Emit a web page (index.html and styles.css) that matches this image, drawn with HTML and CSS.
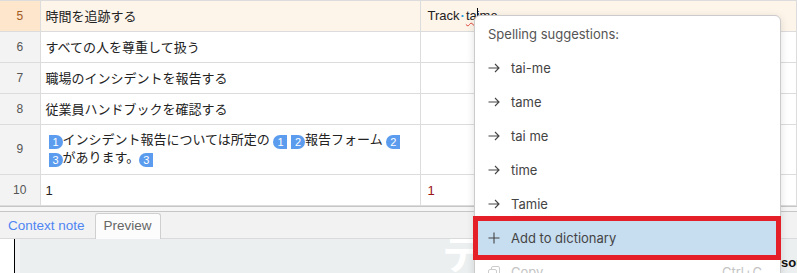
FILE: index.html
```html
<!DOCTYPE html>
<html lang="ja">
  <head>
    <meta charset="UTF-8">
    <meta name="viewport" content="width=device-width, initial-scale=1.0">
    <title>Segment editor</title>
    <link rel="stylesheet" href="styles.css">
  </head>
  <body>
    <div class="editor">
      <table class="segments">
        <colgroup>
          <col class="numcol">
          <col class="srccol">
          <col class="tgtcol">
        </colgroup>
        <tr class="active">
          <td class="num">5</td>
          <td class="src">時間を追跡する</td>
          <td class="tgt">Track<span class="spacedot">·</span><span class="misspelt">ta<span class="caret"></span>ime</span></td>
        </tr>
        <tr>
          <td class="num">6</td>
          <td class="src">すべての人を尊重して扱う</td>
          <td class="tgt"></td>
        </tr>
        <tr>
          <td class="num">7</td>
          <td class="src">職場のインシデントを報告する</td>
          <td class="tgt"></td>
        </tr>
        <tr>
          <td class="num">8</td>
          <td class="src">従業員ハンドブックを確認する</td>
          <td class="tgt"></td>
        </tr>
        <tr class="tall">
          <td class="num">9</td>
          <td class="src tagged">
            <span class="tag open">1</span>インシデント報告については所定の <span class="tag close">1</span> <span class="tag open">2</span>報告フォーム <span class="tag close">2</span><br>
            <span class="tag open">3</span>があります。<span class="tag close">3</span>
          </td>
          <td class="tgt"></td>
        </tr>
        <tr>
          <td class="num">10</td>
          <td class="src">1</td>
          <td class="tgt"><span class="num-red">1</span></td>
        </tr>
      </table>

      <div class="splitter"></div>

      <div class="tabs">
        <div class="tab link">Context note</div>
        <div class="tab current">Preview</div>
      </div>

      <div class="preview">
        <div class="gutter"></div>
        <div class="pv-body">
          <div class="pv-title">テ</div>
          <div class="pv-source">source</div>
        </div>
      </div>
    </div>

    <div class="menu">
      <div class="menu-head">Spelling suggestions:</div>
      <div class="menu-item">
        <svg class="ico" viewBox="0 0 12 10"><path d="M0.5 5H11M7 1l4 4-4 4" fill="none" stroke="#444" stroke-width="1.1"/></svg>
        <span>tai-me</span>
      </div>
      <div class="menu-item">
        <svg class="ico" viewBox="0 0 12 10"><path d="M0.5 5H11M7 1l4 4-4 4" fill="none" stroke="#444" stroke-width="1.1"/></svg>
        <span>tame</span>
      </div>
      <div class="menu-item">
        <svg class="ico" viewBox="0 0 12 10"><path d="M0.5 5H11M7 1l4 4-4 4" fill="none" stroke="#444" stroke-width="1.1"/></svg>
        <span>tai me</span>
      </div>
      <div class="menu-item">
        <svg class="ico" viewBox="0 0 12 10"><path d="M0.5 5H11M7 1l4 4-4 4" fill="none" stroke="#444" stroke-width="1.1"/></svg>
        <span>time</span>
      </div>
      <div class="menu-item">
        <svg class="ico" viewBox="0 0 12 10"><path d="M0.5 5H11M7 1l4 4-4 4" fill="none" stroke="#444" stroke-width="1.1"/></svg>
        <span>Tamie</span>
      </div>
      <div class="menu-item hover">
        <svg class="ico" viewBox="0 0 12 12"><path d="M6 0.5v11M0.5 6h11" fill="none" stroke="#444" stroke-width="1.1"/></svg>
        <span>Add to dictionary</span>
      </div>
      <div class="menu-item disabled">
        <svg class="ico" viewBox="0 0 12 12"><rect x="3.5" y="0.5" width="8" height="8" rx="1.5" fill="none" stroke="#ccc"/><rect x="0.5" y="3.5" width="8" height="8" rx="1.5" fill="#fff" stroke="#ccc"/></svg>
        <span>Copy</span>
        <span class="shortcut">Ctrl+C</span>
      </div>
    </div>
  </body>
</html>
```

FILE: styles.css
```css
body {
  margin: 0;
  background-color: white;
  font-family: "Liberation Sans", "Noto Sans CJK JP", sans-serif;
  overflow: hidden;
}
.editor {
  display: flex;
  flex-direction: column;
  width: 797px;
  height: 273px;
  overflow: hidden;
}
.segments {
  flex-shrink: 0;
  width: 100%;
  height: 206px;
  table-layout: fixed;
  border-collapse: collapse;
  border-top: 1px solid #e2e2e2;
  font-size: 13px;
  color: #222;
}
.numcol {
  width: 40px;
}
.srccol {
  width: 380px;
}
.segments td {
  height: 29px;
  padding: 0 5px;
  border: 1px solid #dcdcdc;
  vertical-align: middle;
  white-space: nowrap;
}
.segments td.num {
  padding: 0;
  text-align: center;
  font-size: 12px;
  color: #555;
  background-color: #f3f3f3;
  border-left: none;
}
.segments tr.active td {
  background-color: #fdf4ea;
}
.segments tr.active td.num {
  background-color: #fde6cc;
  color: #a25a1c;
}
.segments tr.tall td {
  height: 48px;
}
.tgt {
  padding-left: 7px !important;
}
.tagged {
  line-height: 18px;
  padding-left: 8px !important;
}
.tag {
  display: inline-block;
  width: 14px;
  height: 14px;
  line-height: 14px;
  vertical-align: -2px;
  text-align: center;
  font-size: 11px;
  color: white;
  background-color: #5b9cee;
}
.tag.open {
  border-radius: 0 7px 7px 0;
}
.tag.close {
  border-radius: 7px 0 0 7px;
}
.spacedot {
  color: #2a9fd8;
  font-weight: bold;
  margin: 0 1px;
}
.misspelt {
  text-decoration: underline wavy #e0443a;
  text-underline-offset: 2px;
  text-decoration-thickness: 1px;
}
.caret {
  display: inline-block;
  width: 1px;
  height: 16px;
  margin-right: -1px;
  vertical-align: -4px;
  background-color: black;
}
.num-red {
  color: #9a1414;
}
.splitter {
  flex-shrink: 0;
  height: 4px;
  border-top: 1px solid #c6c6c6;
  border-bottom: 1px solid #c6c6c6;
  background-color: #f6f6f6;
}
.tabs {
  flex-shrink: 0;
  display: flex;
  align-items: flex-end;
  height: 26px;
  background-color: #f2f2f2;
  border-bottom: 1px solid #dadada;
}
.tab {
  height: 24px;
  line-height: 24px;
  font-size: 13.5px;
}
.tab.link {
  padding: 0 10px 0 8px;
  color: #4f86f2;
}
.tab.current {
  padding: 0 8px;
  color: #666;
  background-color: #fcfcfc;
  border: 1px solid #cfcfcf;
  border-bottom: none;
  border-radius: 3px 3px 0 0;
  margin-bottom: -1px;
  height: 25px;
}
.preview {
  display: flex;
  flex: 1;
  min-height: 0;
}
.gutter {
  flex-shrink: 0;
  width: 14px;
  background-color: white;
  border-right: 1px solid black;
}
.pv-body {
  display: flex;
  flex: 1;
  min-width: 0;
  overflow: hidden;
  background-color: #eceff0;
  border-left: 5px solid #f1f3f4;
}
.pv-title {
  flex-shrink: 0;
  width: 339px;
  margin-left: 422px;
  margin-top: -9px;
  font-family: "Noto Sans CJK JP", sans-serif;
  font-size: 40px;
  font-weight: bold;
  line-height: 1.1;
  color: white;
}
.pv-source {
  flex-shrink: 0;
  margin-top: 16px;
  font-size: 13px;
  font-weight: bold;
  color: #111;
}
.menu {
  position: absolute;
  left: 474px;
  top: 15px;
  width: 305px;
  height: 300px;
  background-color: white;
  border: 1px solid #cbcbcb;
  border-radius: 6px;
  box-shadow: 0 2px 8px rgba(0, 0, 0, 0.12);
  font-family: "Inter", sans-serif;
  font-size: 13px;
  color: #444;
}
.menu-head {
  height: 35px;
  line-height: 36px;
  padding-left: 13px;
  color: #555;
}
.menu-item {
  display: flex;
  align-items: center;
  gap: 11px;
  height: 34px;
  padding: 0 18px 0 13px;
}
.menu-item .ico {
  width: 12px;
  height: 12px;
}
.menu-item.hover {
  margin: 0 4px 0 3px;
  padding-left: 10px;
  background-color: #c7ddf0;
  outline: 5px solid #e41f27;
}
.menu-item.disabled {
  color: #c4c4c4;
}
.shortcut {
  margin-left: auto;
}
```
